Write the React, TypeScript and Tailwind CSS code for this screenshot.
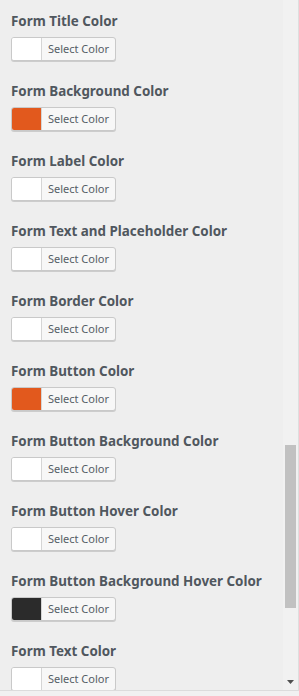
import React from 'react';

const fields: { label: string; color: string }[] = [
  { label: 'Form Title Color', color: '#ffffff' },
  { label: 'Form Background Color', color: '#e2591d' },
  { label: 'Form Label Color', color: '#ffffff' },
  { label: 'Form Text and Placeholder Color', color: '#ffffff' },
  { label: 'Form Border Color', color: '#ffffff' },
  { label: 'Form Button Color', color: '#e2591d' },
  { label: 'Form Button Background Color', color: '#ffffff' },
  { label: 'Form Button Hover Color', color: '#ffffff' },
  { label: 'Form Button Background Hover Color', color: '#2b2b2b' },
  { label: 'Form Text Color', color: '#ffffff' },
];

const ColorField: React.FC<{ label: string; color: string }> = ({ label, color }) => (
  <div className="pt-[11px] pb-[9px] pl-[11px]">
    <div className="h-[20px] leading-[20px] text-[13.4px] font-bold text-[#50575e] whitespace-nowrap">{label}</div>
    <div className="mt-[6px] flex h-[24px] w-[105px] rounded-[3px] border border-[#c9c9c9] bg-[#f7f7f7] shadow-[0_1px_0_#cccccc] overflow-hidden">
      <span className="w-[30px] h-full border-r border-[#d5d5d5]" style={{ backgroundColor: color }} />
      <span className="flex-1 flex items-center justify-center text-[11px] text-[#555d66]">Select Color</span>
    </div>
  </div>
);

export default function App() {
  return (
    <div className="w-[299px] h-[696px] bg-[#f1f1f1] overflow-hidden" style={{ fontFamily: '"Noto Sans", sans-serif' }}>
      <div className="flex h-[691px] border-b border-[#dcdcdc]">
        <div className="flex-1 bg-[#eeeeee] overflow-hidden">
          {fields.map((f) => (
            <ColorField key={f.label} label={f.label} color={f.color} />
          ))}
        </div>
        <div className="w-[16px] flex flex-col bg-[#f1f1f1] border-r border-[#dedede]">
          <div className="mt-[445px] mx-[2px] h-[163px] bg-[#c1c1c1]" />
          <div className="mt-auto mb-[6px] flex justify-center">
            <svg width="7" height="4" viewBox="0 0 7 4">
              <path d="M0 0h7L3.5 4z" fill="#505050" />
            </svg>
          </div>
        </div>
      </div>
    </div>
  );
}
